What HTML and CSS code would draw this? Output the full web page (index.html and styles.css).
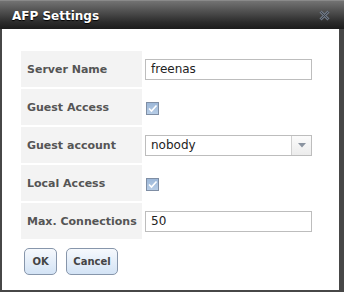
FILE: index.html
```html
<!DOCTYPE html>
<html>
<head>
<meta charset="utf-8">
<link rel="stylesheet" href="styles.css">
</head>
<body>
<div class="dialog">
  <div class="titlebar">
    <span class="title">AFP Settings</span>
    <svg class="close" width="11" height="11" viewBox="0 0 11 11">
      <path d="M1.5 1.5 L9.5 9.5 M9.5 1.5 L1.5 9.5" stroke="#6d7784" stroke-width="3" fill="none"/>
      <path d="M1.5 1.5 L9.5 9.5 M9.5 1.5 L1.5 9.5" stroke="#3c4149" stroke-width="1" fill="none"/>
    </svg>
  </div>
  <div class="content">
    <table class="form">
      <tr>
        <th>Server Name</th>
        <td><div class="input">freenas</div></td>
      </tr>
      <tr>
        <th>Guest Access</th>
        <td><span class="check"><svg width="11" height="11" viewBox="0 0 11 11"><path d="M2 5.5 L4.5 8 L9.5 2.5" stroke="#fff" stroke-width="1.6" fill="none"/></svg></span></td>
      </tr>
      <tr>
        <th>Guest account</th>
        <td><div class="input select"><span class="val">nobody</span><span class="arrow"><svg width="8" height="5" viewBox="0 0 8 5"><path d="M0 0 L8 0 L4 4.5 Z" fill="#8a93a0"/></svg></span></div></td>
      </tr>
      <tr>
        <th>Local Access</th>
        <td><span class="check"><svg width="11" height="11" viewBox="0 0 11 11"><path d="M2 5.5 L4.5 8 L9.5 2.5" stroke="#fff" stroke-width="1.6" fill="none"/></svg></span></td>
      </tr>
      <tr>
        <th>Max. Connections</th>
        <td><div class="input">50</div></td>
      </tr>
    </table>
    <div class="buttons">
      <button class="btn ok">OK</button>
      <button class="btn cancel">Cancel</button>
    </div>
  </div>
</div>
</body>
</html>
```
FILE: styles.css
```css
html, body {
  margin: 0;
  padding: 0;
  background: #fff;
}
.dialog {
  width: 344px;
  height: 292px;
  box-sizing: border-box;
  border: 2px solid #474747;
  border-top: 0;
  border-right-width: 5px;
  background: #fff;
  font-family: "DejaVu Sans", Verdana, sans-serif;
  display: flex;
  flex-direction: column;
}
.titlebar {
  height: 29px;
  flex: none;
  box-sizing: border-box;
  margin: 0 -5px 0 -2px;
  padding: 0 12px 0 12px;
  border-top: 1px solid #8a8a8a;
  background: linear-gradient(#737373 0%, #4d4d4d 40%, #2c2c2c 75%, #1c1c1c 100%);
  display: flex;
  align-items: center;
  justify-content: space-between;
}
.title {
  color: #fff;
  font-weight: bold;
  font-size: 12px;
  text-shadow: 0 1px 1px #000;
  margin-top: 1px;
}
.close {
  margin-right: 2px;
  margin-top: 1px;
}
.content {
  padding: 20px 0 0 17px;
}
.form {
  border-collapse: separate;
  border-spacing: 2px;
}
.form th {
  background: #f3f3f3;
  color: #555;
  font-weight: bold;
  font-size: 11px;
  text-align: left;
  width: 121px;
  min-width: 121px;
  height: 36px;
  padding: 0 0 0 6px;
  box-sizing: border-box;
  vertical-align: middle;
  white-space: nowrap;
}
.form td {
  padding: 0 0 0 1px;
  vertical-align: middle;
}
.input {
  width: 167px;
  height: 21px;
  box-sizing: border-box;
  border: 1px solid #bdbdbd;
  font-size: 12px;
  color: #222;
  padding: 0 5px;
  line-height: 19px;
  background: #fff;
}
.select {
  display: flex;
  padding-right: 0;
}
.select .val {
  flex: 1;
}
.select .arrow {
  width: 19px;
  border-left: 1px solid #d0d0d0;
  background: linear-gradient(#fbfbfb, #ececec);
  display: flex;
  align-items: center;
  justify-content: center;
}
.check {
  display: inline-block;
  width: 13px;
  height: 13px;
  box-sizing: border-box;
  border: 1px solid #7f8ea4;
  background: linear-gradient(#9cb7d8, #b7cde6);
  margin-left: 1px;
  vertical-align: middle;
}
.check svg {
  display: block;
  margin: 0;
}
.buttons {
  display: flex;
  gap: 9px;
  padding: 7px 0 0 5px;
}
.btn {
  height: 27px;
  box-sizing: border-box;
  border: 1px solid #8796ab;
  border-radius: 5px;
  background: linear-gradient(#f6f9fd, #d3e3f5);
  font-family: "DejaVu Sans", Verdana, sans-serif;
  font-weight: bold;
  font-size: 10px;
  color: #444;
  padding: 0;
  margin: 0;
}
.ok {
  width: 33px;
}
.cancel {
  width: 52px;
}
```
